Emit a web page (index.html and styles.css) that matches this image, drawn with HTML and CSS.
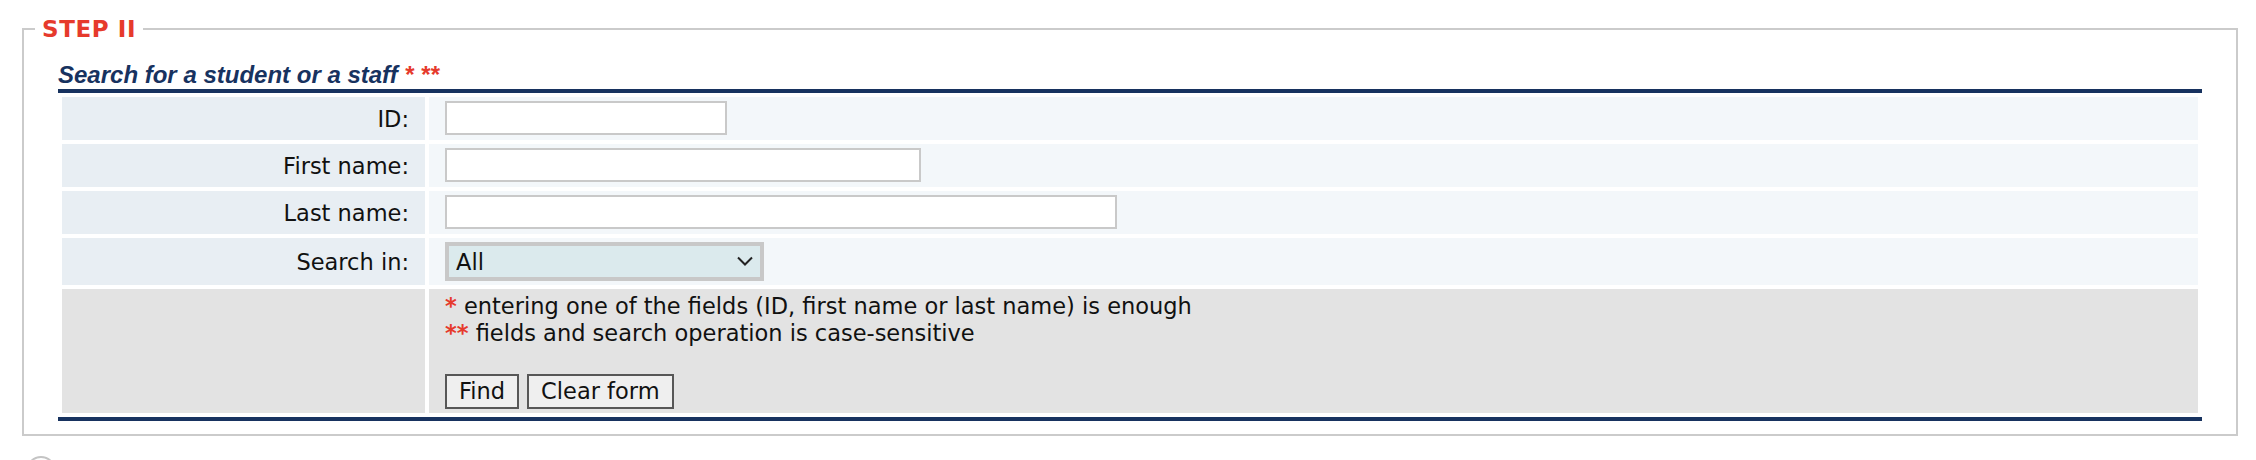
FILE: index.html
```html
<!DOCTYPE html>
<html lang="en">
<head>
  <meta charset="UTF-8">
  <meta name="viewport" content="width=device-width, initial-scale=1.0">
  <title>Search for a student or a staff</title>
  <link rel="stylesheet" href="styles.css">
</head>
<body>
  <div class="page">
    <fieldset class="step">
      <legend>STEP II</legend>
      <h3 class="search-title">Search for a student or a staff <span class="req">* **</span></h3>
      <form>
        <table class="search-table">
          <tr>
            <td class="label">ID:</td>
            <td class="field"><input type="text" class="input-id"></td>
          </tr>
          <tr>
            <td class="label">First name:</td>
            <td class="field"><input type="text" class="input-first"></td>
          </tr>
          <tr>
            <td class="label">Last name:</td>
            <td class="field"><input type="text" class="input-last"></td>
          </tr>
          <tr class="select-row">
            <td class="label">Search in:</td>
            <td class="field">
              <span class="select-wrap">
                <select>
                  <option>All</option>
                  <option>Students</option>
                  <option>Staff</option>
                </select>
                <svg class="chevron" width="16" height="10" viewBox="0 0 16 10"><path d="M1 1.5 L8 8.5 L15 1.5" fill="none" stroke="#222" stroke-width="2"/></svg>
              </span>
            </td>
          </tr>
          <tr class="notes-row">
            <td class="label"></td>
            <td class="field">
              <div class="note"><span class="req">*</span> entering one of the fields (ID, first name or last name) is enough</div>
              <div class="note"><span class="req">**</span> fields and search operation is case-sensitive</div>
              <div class="actions">
                <button type="submit">Find</button>
                <button type="reset">Clear form</button>
              </div>
            </td>
          </tr>
        </table>
      </form>
    </fieldset>
    <div class="help-icon"></div>
  </div>
</body>
</html>
```

FILE: styles.css
```css
body {
  margin: 0;
  font-family: "DejaVu Sans", Verdana, sans-serif;
  font-size: 22.5px;
  color: #111;
  background: #fff;
}
.page {
  box-sizing: border-box;
  height: 460px;
  overflow: hidden;
  padding: 16px 18px 0 22px;
}
.step {
  margin: 0;
  min-width: 0;
  border: 2px solid #cbcbcb;
  padding: 19px 34px 13px;
}
.step legend {
  margin-left: -23px;
  padding: 0 7px;
  font-size: 23px;
  line-height: 26px;
  font-weight: bold;
  letter-spacing: 0.6px;
  color: #e63a2c;
}
.search-title {
  margin: 0;
  font-family: "Liberation Sans", Arial, sans-serif;
  font-size: 24px;
  font-style: italic;
  font-weight: bold;
  line-height: 28px;
  color: #17325f;
}
.req {
  color: #e63a2c;
}
.search-table {
  width: 100%;
  border-collapse: separate;
  border-spacing: 4px;
  border-top: 4px solid #17325f;
  border-bottom: 4px solid #17325f;
}
.search-table td {
  vertical-align: middle;
}
.label {
  box-sizing: border-box;
  width: 363px;
  padding: 0 16px;
  text-align: right;
  background: #e8eef3;
}
.field {
  padding: 4px 16px 5px;
  background: #f3f7fa;
}
.field input {
  display: block;
  box-sizing: border-box;
  height: 34px;
  border: 2px solid #c9c9c9;
  background: #fff;
  padding: 0 6px;
  font: inherit;
}
.input-id {
  width: 282px;
}
.input-first {
  width: 476px;
}
.input-last {
  width: 672px;
}
.select-row .field {
  padding: 4px 16px 4px;
}
.select-wrap {
  position: relative;
  display: block;
  width: 319px;
  height: 39px;
}
.select-wrap select {
  -webkit-appearance: none;
  appearance: none;
  box-sizing: border-box;
  width: 319px;
  height: 39px;
  margin: 0;
  border: 4px solid #c8c8c8;
  border-radius: 0;
  padding: 0 7px;
  background: #dbeaed;
  font: inherit;
  color: #111;
}
.chevron {
  position: absolute;
  right: 11px;
  top: 14px;
  pointer-events: none;
}
.notes-row .label,
.notes-row .field {
  background: #e3e3e3;
}
.notes-row .field {
  vertical-align: top;
  padding: 4px 16px;
  line-height: 27px;
}
.note .req {
  font-weight: bold;
}
.actions {
  display: flex;
  gap: 8px;
  margin-top: 27px;
}
.actions button {
  box-sizing: border-box;
  height: 35px;
  padding: 0 12px;
  border: 2px solid #575757;
  border-radius: 0;
  background: #efefef;
  font: inherit;
  line-height: 1;
  color: #111;
}
.help-icon {
  width: 26px;
  height: 26px;
  margin: 20px 0 0 4px;
  border: 2px solid #c4c4c4;
  border-radius: 50%;
}
```
